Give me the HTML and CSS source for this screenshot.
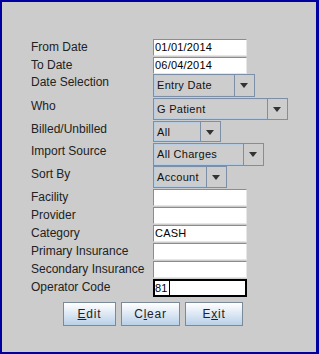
FILE: index.html
```html
<!DOCTYPE html>
<html lang="en">
<head>
  <meta charset="UTF-8">
  <title>Report Options</title>
  <link rel="stylesheet" href="styles.css">
</head>
<body>

<div class="window">
  <div class="form">
    <label>From Date</label>
    <div class="field">01/01/2014</div>

    <label>To Date</label>
    <div class="field">06/04/2014</div>

    <label>Date Selection</label>
    <div class="combo w-date"><span class="combo-text">Entry Date</span><span class="combo-btn"></span></div>

    <label>Who</label>
    <div class="combo w-who"><span class="combo-text">G Patient</span><span class="combo-btn"></span></div>

    <label>Billed/Unbilled</label>
    <div class="combo w-billed"><span class="combo-text">All</span><span class="combo-btn"></span></div>

    <label>Import Source</label>
    <div class="combo w-import"><span class="combo-text">All Charges</span><span class="combo-btn"></span></div>

    <label>Sort By</label>
    <div class="combo w-sort"><span class="combo-text">Account</span><span class="combo-btn"></span></div>

    <label>Facility</label>
    <div class="field"></div>

    <label>Provider</label>
    <div class="field"></div>

    <label>Category</label>
    <div class="field">CASH</div>

    <label>Primary Insurance</label>
    <div class="field"></div>

    <label>Secondary Insurance</label>
    <div class="field"></div>

    <label>Operator Code</label>
    <div class="field focused"><span class="caret">81</span></div>
  </div>

  <div class="buttons">
    <button class="btn b-edit"><u>E</u>dit</button>
    <button class="btn b-clear">C<u>l</u>ear</button>
    <button class="btn b-exit">E<u>x</u>it</button>
  </div>
</div>

</body>
</html>
```

FILE: styles.css
```css
body { margin:0; font-family:'Liberation Sans',Arial,sans-serif; }
.window { width:319px; height:354px; box-sizing:border-box; background:#cccccc; border:solid #0000a0; border-width:2px 3px 2px 2px; }

.form { display:grid; grid-template-columns:122px auto; grid-template-rows:18px 17px 24px 23px 22px 23px 23px 18px 18px 18px 18px 18px 18px; padding:37px 0 0 29px; align-items:start; }
.form label { font-size:12px; line-height:14px; padding-top:1px; color:#222; white-space:nowrap; }

.field { width:94px; height:17px; box-sizing:border-box; background:#fff; border:1px solid; border-color:#8c8c8c #e6e6e6 #e6e6e6 #8c8c8c; font-size:11px; line-height:15px; padding-left:1px; color:#000; letter-spacing:0.2px; }
.field.focused { border:2px solid #000; height:18px; line-height:14px; padding-left:0; }
.caret { display:inline-block; border-right:1px solid #000; padding-right:1px; line-height:14px; }

.combo { display:flex; height:22px; box-sizing:border-box; border:1px solid #7d8fa6; background:#cdcdcd; }
.combo-text { flex:1; font-size:11px; line-height:18px; padding-left:2px; border:1px solid #b8cde2; border-right:none; color:#111; letter-spacing:0.3px; }
.combo-btn { width:19px; border-left:1px solid #7d8fa6; position:relative; }
.combo-btn::after { content:""; position:absolute; left:5px; top:8px; border-left:4px solid transparent; border-right:4px solid transparent; border-top:5px solid #333; }
.w-date { width:102px; height:23px; }
.w-who { width:135px; }
.w-billed { width:68px; height:21px; }
.w-import { width:111px; height:23px; }
.w-sort { width:74px; }

.buttons { display:flex; gap:5px; padding:5px 0 0 61px; }
.btn { height:24px; box-sizing:border-box; border:1px solid #7a8a99; background:linear-gradient(#ffffff, #b9d0e8); font-family:'Liberation Sans',Arial,sans-serif; font-size:12px; letter-spacing:0.8px; color:#222; padding:0; }
.b-edit { width:53px; }
.b-clear { width:59px; }
.b-exit { width:58px; }
```
